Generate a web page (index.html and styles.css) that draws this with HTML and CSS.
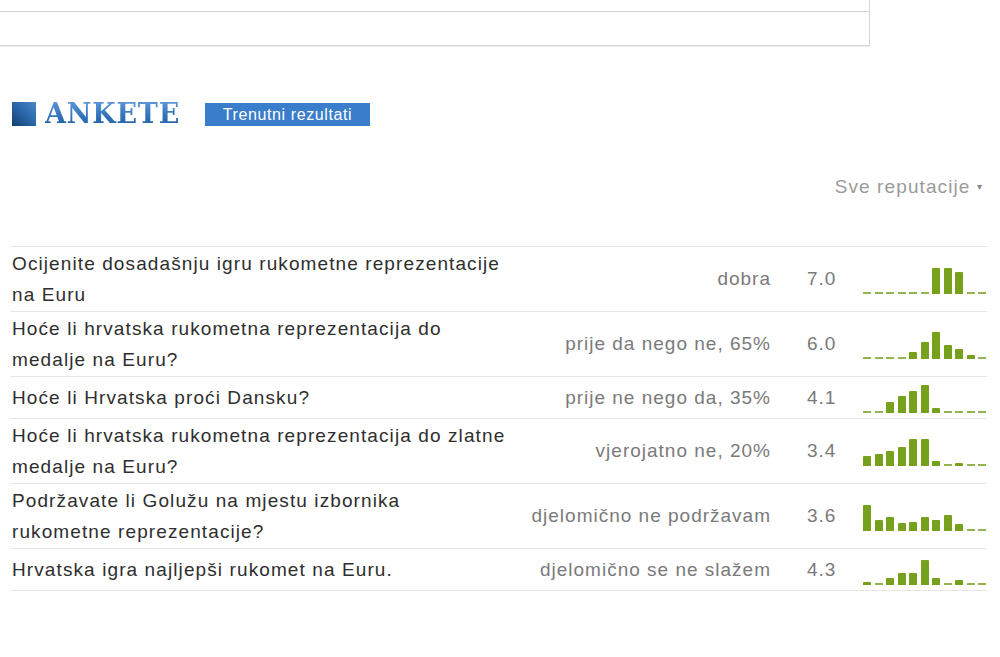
FILE: index.html
```html
<!DOCTYPE html>
<html lang="hr">
<head>
    <meta charset="UTF-8">
    <title>Ankete</title>
    <link rel="stylesheet" href="styles.css">
</head>
<body>
<div class="topBox">
    <div class="topBoxHead"></div>
    <div class="topBoxBody"></div>
</div>

<div class="polls">
    <div class="pollsHead">
        <span class="logoSquare"></span>
        <h2 class="pollsTitle">ANKETE</h2>
        <a class="resultsButton" href="#">Trenutni rezultati</a>
    </div>

    <div class="filter">Sve reputacije <span class="filterArrow">&#9662;</span></div>

    <div class="pollList">
        <div class="pollRow">
            <div class="question">Ocijenite dosadašnju igru rukometne reprezentacije<br>na Euru</div>
            <div class="answer">dobra</div>
            <div class="score">7.0</div>
            <div class="chart">
                <span class="dash"></span><span class="dash"></span><span class="dash"></span><span class="dash"></span><span class="dash"></span><span class="dash"></span>
                <span class="bar" style="height:26px"></span><span class="bar" style="height:26px"></span><span class="bar" style="height:22px"></span>
                <span class="dash"></span><span class="dash"></span>
            </div>
        </div>
        <div class="pollRow">
            <div class="question">Hoće li hrvatska rukometna reprezentacija do<br>medalje na Euru?</div>
            <div class="answer">prije da nego ne, 65%</div>
            <div class="score">6.0</div>
            <div class="chart">
                <span class="dash"></span><span class="dash"></span><span class="dash"></span><span class="dash"></span>
                <span class="bar" style="height:7px"></span><span class="bar" style="height:17px"></span><span class="bar" style="height:27px"></span><span class="bar" style="height:14px"></span><span class="bar" style="height:10px"></span><span class="bar" style="height:4px"></span>
                <span class="dash"></span>
            </div>
        </div>
        <div class="pollRow">
            <div class="question">Hoće li Hrvatska proći Dansku?</div>
            <div class="answer">prije ne nego da, 35%</div>
            <div class="score">4.1</div>
            <div class="chart">
                <span class="dash"></span><span class="dash"></span>
                <span class="bar" style="height:11px"></span><span class="bar" style="height:17px"></span><span class="bar" style="height:22px"></span><span class="bar" style="height:28px"></span><span class="bar" style="height:5px"></span>
                <span class="dash"></span><span class="dash"></span><span class="dash"></span><span class="dash"></span>
            </div>
        </div>
        <div class="pollRow">
            <div class="question">Hoće li hrvatska rukometna reprezentacija do zlatne<br>medalje na Euru?</div>
            <div class="answer">vjerojatno ne, 20%</div>
            <div class="score">3.4</div>
            <div class="chart">
                <span class="bar" style="height:10px"></span><span class="bar" style="height:12px"></span><span class="bar" style="height:15px"></span><span class="bar" style="height:19px"></span><span class="bar" style="height:27px"></span><span class="bar" style="height:27px"></span><span class="bar" style="height:5px"></span>
                <span class="dash"></span><span class="bar" style="height:3px"></span><span class="dash"></span><span class="dash"></span>
            </div>
        </div>
        <div class="pollRow">
            <div class="question">Podržavate li Golužu na mjestu izbornika<br>rukometne reprezentacije?</div>
            <div class="answer">djelomično ne podržavam</div>
            <div class="score">3.6</div>
            <div class="chart">
                <span class="bar" style="height:26px"></span><span class="bar" style="height:11px"></span><span class="bar" style="height:14px"></span><span class="bar" style="height:8px"></span><span class="bar" style="height:9px"></span><span class="bar" style="height:14px"></span><span class="bar" style="height:11px"></span><span class="bar" style="height:16px"></span><span class="bar" style="height:7px"></span>
                <span class="dash"></span><span class="dash"></span>
            </div>
        </div>
        <div class="pollRow">
            <div class="question">Hrvatska igra najljepši rukomet na Euru.</div>
            <div class="answer">djelomično se ne slažem</div>
            <div class="score">4.3</div>
            <div class="chart">
                <span class="bar" style="height:3px"></span><span class="dash"></span>
                <span class="bar" style="height:7px"></span><span class="bar" style="height:12px"></span><span class="bar" style="height:12px"></span><span class="bar" style="height:25px"></span><span class="bar" style="height:7px"></span>
                <span class="dash"></span><span class="bar" style="height:5px"></span><span class="dash"></span><span class="dash"></span>
            </div>
        </div>
    </div>
</div>
</body>
</html>
```

FILE: styles.css
```css
* {
    box-sizing: border-box;
}

body {
    margin: 0;
    background: #fff;
    font-family: "Liberation Sans", Arial, sans-serif;
    color: #333;
}

.topBox {
    width: 871px;
    margin-top: -20px;
    margin-left: -1px;
    border: 1px solid #d6d6d6;
    box-shadow: 0 1px 0 #ececec;
}

.topBoxHead {
    height: 31px;
    border-bottom: 1px solid #d6d6d6;
}

.topBoxBody {
    height: 33px;
}

.polls {
    width: 987px;
    margin-top: 56px;
    padding-left: 10px;
}

.pollsHead {
    display: flex;
    align-items: center;
    height: 24px;
    padding-left: 2px;
}

.logoSquare {
    width: 24px;
    height: 24px;
    background: linear-gradient(45deg, #123f74, #2f6db0 60%, #4a88c8);
}

.pollsTitle {
    width: 136px;
    margin: 0 0 0 9px;
    font: bold 27px/24px "DejaVu Serif", "Liberation Serif", serif;
    letter-spacing: 0.8px;
    white-space: nowrap;
    background: linear-gradient(#5a96d8, #3474ba 55%, #2060a4);
    -webkit-background-clip: text;
    background-clip: text;
    color: transparent;
}

.resultsButton {
    margin-left: 24px;
    width: 165px;
    height: 23px;
    line-height: 23px;
    background: #3a7dcb;
    color: #fff;
    font-size: 16px;
    letter-spacing: 0.6px;
    text-align: center;
    text-decoration: none;
}

.filter {
    margin-top: 50px;
    height: 22px;
    line-height: 22px;
    text-align: right;
    padding-right: 4px;
    color: #9a9a9a;
    font-size: 19px;
    letter-spacing: 1.1px;
}

.filterArrow {
    font-size: 10px;
    vertical-align: 3px;
    color: #888;
}

.pollList {
    margin-top: 48px;
    border-bottom: 1px solid #e6e6e6;
}

.pollRow {
    display: grid;
    grid-template-columns: 510px 251px 91px 125px;
    align-items: center;
    min-height: 42px;
    padding: 1px 0;
    border-top: 1px solid #e6e6e6;
}

.question {
    padding-left: 2px;
    font-size: 19px;
    line-height: 31px;
    letter-spacing: 1.1px;
    white-space: nowrap;
    color: #2e2e2e;
}

.answer {
    text-align: right;
    font-size: 19px;
    letter-spacing: 1px;
    color: #7a7a7a;
}

.score {
    padding-left: 36px;
    font-size: 19px;
    letter-spacing: 1px;
    color: #7a7a7a;
}

.chart {
    display: flex;
    align-items: flex-end;
    gap: 3.5px;
    height: 30px;
    padding-left: 1px;
}

.bar {
    width: 8px;
    background: #77a11d;
    border-radius: 1px 1px 0 0;
}

.dash {
    width: 8px;
    height: 2px;
    background: #93b34e;
}
```
